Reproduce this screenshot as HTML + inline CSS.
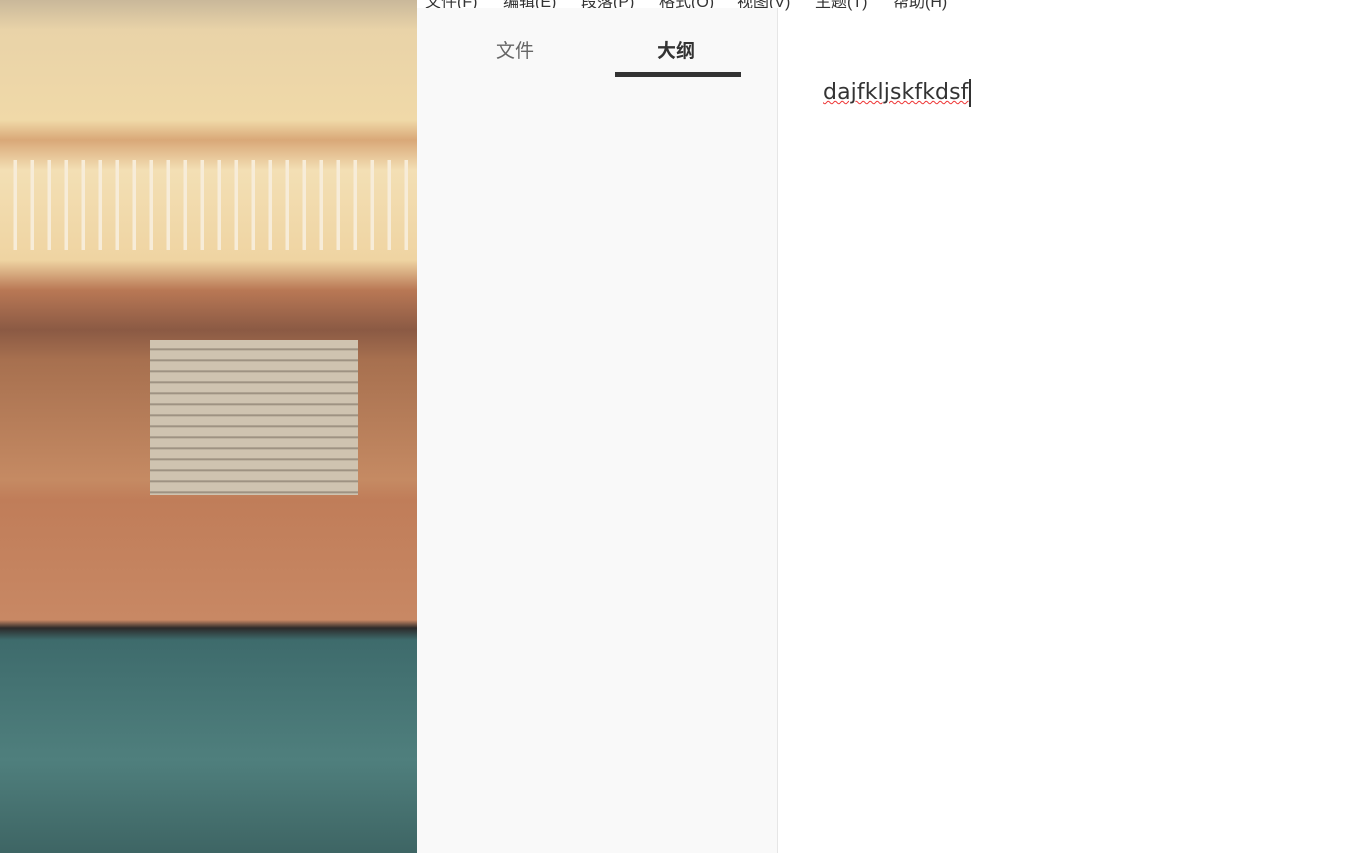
<!DOCTYPE html>
<html><head><meta charset="utf-8"><style>
body{margin:0;width:1355px;height:853px;overflow:hidden;position:relative;background:#fff;font-family:"Liberation Sans","Noto Sans CJK SC",sans-serif}
#img{position:absolute;left:0;top:0;width:417px;height:853px;background:linear-gradient(180deg,#c9b89a 0,#e9d3a8 30px,#f0d9a8 120px,#d9a878 140px,#f3dfb4 170px,#efd4a2 260px,#b97855 290px,#8b5a44 330px,#a7704f 360px,#c58a63 480px,#c07d59 500px,#c88864 620px,#2c2a2a 628px,#3e6b6c 640px,#4f7f7d 760px,#3e6564 853px)}
#side{position:absolute;left:417px;top:8px;width:360px;height:845px;background:#f9f9f9;border-right:1px solid #e6e6e6}
#menu{position:absolute;left:425px;top:-12px;font-size:16px;color:#333;white-space:nowrap}
#menu span{display:inline-block;width:78px}
.tab{position:absolute;top:28px;font-size:19px}
#content{position:absolute;left:823px;top:79px;color:#333;border-right:2px solid #333;line-height:28px;font-family:"DejaVu Sans",sans-serif;font-size:22px;letter-spacing:0.1px}
</style></head><body>
<div id="img">
<div style="position:absolute;left:150px;top:340px;width:208px;height:155px;background:repeating-linear-gradient(180deg,#cfc3b0 0,#cfc3b0 8px,#8d8173 9px,#cfc3b0 11px)"></div>
<div style="position:absolute;left:0;top:160px;width:417px;height:90px;background:repeating-linear-gradient(90deg,transparent 0,transparent 13px,#f7ecd8 14px,#f7ecd8 17px)"></div>
</div>
<div id="menu"><span>文件(F)</span><span>编辑(E)</span><span>段落(P)</span><span>格式(O)</span><span>视图(V)</span><span>主题(T)</span><span>帮助(H)</span></div>
<div id="side">
<div class="tab" style="left:79px;color:#666">文件</div>
<div class="tab" style="left:240px;color:#333;font-weight:bold">大纲</div>
<div style="position:absolute;left:198px;top:64px;width:126px;height:5px;background:#333"></div>
</div>
<div id="content"><span style="text-decoration:underline wavy #e33;text-decoration-thickness:1px">dajfkljskfkdsf</span></div>
</body></html>
